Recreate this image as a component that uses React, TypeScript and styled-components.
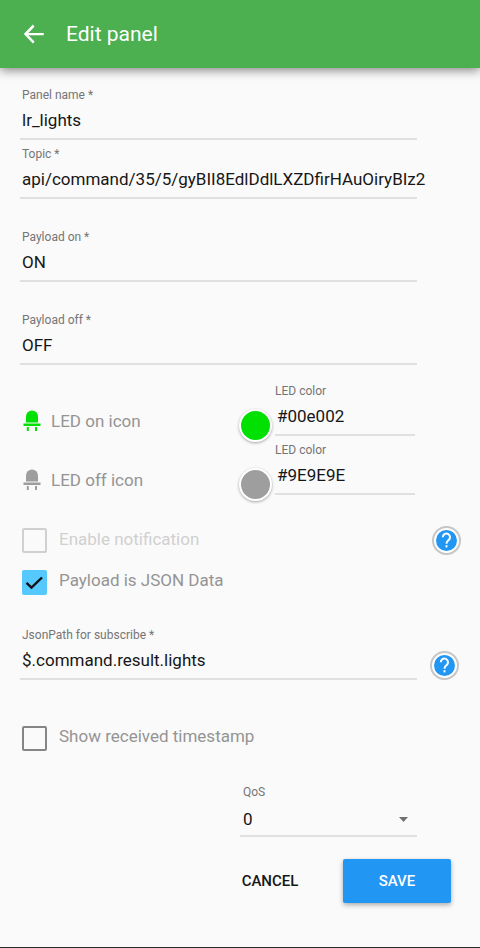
import React, { useId, useState } from "react";
import styled, { createGlobalStyle } from "styled-components";

const GlobalStyle = createGlobalStyle`
  *, *::before, *::after { box-sizing: border-box; }
  body {
    margin: 0;
    background: #fafafa;
    color: #161616;
    font-family: Roboto, "Liberation Sans", sans-serif;
    font-size: 17px;
  }
  button, input, select { font: inherit; color: inherit; }
`;

const Page = styled.div`
  display: flex;
  flex-direction: column;
  min-height: 100vh;
  border-bottom: 1px solid #2b2b2b;
`;

const AppBar = styled.header`
  display: flex;
  align-items: center;
  gap: 19px;
  height: 68px;
  padding: 0 21px;
  background: #4caf50;
  color: #fff;
  box-shadow: 0 2px 10px rgba(0, 0, 0, 0.5);
`;

const BackButton = styled.button`
  display: flex;
  padding: 0;
  border: 0;
  background: none;
  color: #fff;
  cursor: pointer;
`;

const Title = styled.h1`
  margin: 0;
  font-size: 21px;
  line-height: 28px;
  font-weight: 400;
`;

const Form = styled.form`
  display: flex;
  flex-direction: column;
  padding: 19px 19px 0 20px;
`;

const Row = styled.div<{ $top?: number }>`
  display: grid;
  grid-template-columns: minmax(0, 1fr) 44px;
  align-items: center;
  margin-top: ${(p) => p.$top ?? 0}px;
`;

const FieldBox = styled.div`
  display: flex;
  flex-direction: column;
  min-width: 0;
  border-bottom: 2px solid #e0e0e0;
`;

const FieldLabel = styled.label<{ $indent?: number }>`
  padding-left: ${(p) => p.$indent ?? 2}px;
  font-size: 12px;
  line-height: 16px;
  color: #757575;
`;

const FieldInput = styled.input`
  width: calc(100% + 12px);
  height: 35px;
  padding: 0 0 2px 2px;
  border: 0;
  outline: 0;
  background: transparent;
`;

const LedRow = styled.div<{ $top: number }>`
  display: grid;
  grid-template-columns: minmax(0, 1fr) 36px 140px;
  align-items: end;
  margin-top: ${(p) => p.$top}px;
  padding-right: 46px;
`;

const LedName = styled.div`
  display: flex;
  align-items: center;
  gap: 9px;
  height: 30px;
  padding-left: 2px;
  margin-bottom: auto;
  margin-top: 23px;
  color: #949494;
`;

const Swatch = styled.button<{ $color: string }>`
  width: 33px;
  height: 33px;
  margin-bottom: -6px;
  padding: 0;
  border: 2px solid #fff;
  border-radius: 50%;
  background: ${(p) => p.$color};
  box-shadow: 0 1px 3px rgba(0, 0, 0, 0.35);
  cursor: pointer;
`;

const CheckLabel = styled.label<{ $disabled?: boolean }>`
  display: flex;
  align-items: center;
  gap: 12px;
  height: 26px;
  padding-left: 2px;
  color: ${(p) => (p.$disabled ? "#d0d0d0" : "#949494")};
`;

const CheckText = styled.span`
  padding-bottom: 4px;
  line-height: 20px;
`;

const CheckBoxFrame = styled.span`
  display: grid;
  flex: none;
  width: 25px;
  height: 25px;

  > * { grid-area: 1 / 1; }
  > svg { pointer-events: none; }
`;

const CheckInput = styled.input`
  appearance: none;
  width: 25px;
  height: 25px;
  margin: 0;
  border: 2px solid #858585;
  border-radius: 2px;

  &:disabled { border-color: #d0d0d0; }
  &:checked { border-color: #55c8fd; background: #55c8fd; }
`;

const HelpButton = styled.button<{ $inField?: boolean }>`
  display: flex;
  align-items: center;
  justify-content: center;
  justify-self: end;
  align-self: ${(p) => (p.$inField ? "end" : "center")};
  margin-right: ${(p) => (p.$inField ? 2 : 0)}px;
  width: 29px;
  height: 29px;
  padding: 0;
  border: 2px solid #c6c6c6;
  border-radius: 50%;
  background: #fff;
  cursor: pointer;
`;

const QosRow = styled.div`
  display: flex;
  justify-content: flex-end;
  margin-top: 33px;
  padding-right: 44px;
`;

const QosBox = styled(FieldBox)`
  width: 177px;
`;

const SelectWrap = styled.div`
  display: grid;
  align-items: center;

  > * { grid-area: 1 / 1; }
  > svg { justify-self: end; margin: 3px 9px 0 0; pointer-events: none; }
`;

const Select = styled.select`
  appearance: none;
  width: 100%;
  height: 35px;
  padding: 2px 0 0 3px;
  border: 0;
  outline: 0;
  background: transparent;
`;

const Actions = styled.div`
  display: flex;
  justify-content: flex-end;
  gap: 28px;
  margin-top: 22px;
  padding: 0 10px 24px 0;
`;

const ActionButton = styled.button<{ $primary?: boolean }>`
  height: 44px;
  width: ${(p) => (p.$primary ? 108 : 90)}px;
  padding: 0;
  border: 0;
  border-radius: 2px;
  font-size: 15px;
  font-weight: 500;
  color: ${(p) => (p.$primary ? "#fff" : "#161616")};
  background: ${(p) => (p.$primary ? "#2196f3" : "transparent")};
  box-shadow: ${(p) => (p.$primary ? "0 2px 5px rgba(0, 0, 0, 0.32)" : "none")};
  cursor: pointer;
`;

function LedIcon({ color }: { color: string }) {
  return (
    <svg width="20" height="24" viewBox="0 0 20 24" fill={color} aria-hidden="true">
      <path d="M4 13.5V7.500a6 6 0 0 1 12 0v6z" />
      <path d="M1.500 14.500h17v2.500h-17zM4.800 18h2v4h-2zM13 18h2v4h-2z" />
    </svg>
  );
}

function Help({ label, inField }: { label: string; inField?: boolean }) {
  return (
    <HelpButton type="button" aria-label={label} $inField={inField}>
      <svg width="21" height="21" viewBox="0 0 21 21" aria-hidden="true">
        <circle cx="10.5" cy="10.5" r="10.5" fill="#2196f3" />
        <path
          d="M6.800 7.200a3.600 3.600 0 1 1 6 2.700c-1.300 1.200-2.300 1.800-2.300 3.800"
          fill="none"
          stroke="#fff"
          strokeWidth="2"
        />
        <path d="M9.500 15.200h2v2.200h-2z" fill="#fff" />
      </svg>
    </HelpButton>
  );
}

type FieldProps = { label: string; initial: string; indent?: number };

function Field({ label, initial, indent }: FieldProps) {
  const id = useId();
  const [value, setValue] = useState(initial);
  return (
    <FieldBox>
      <FieldLabel htmlFor={id} $indent={indent}>{label}</FieldLabel>
      <FieldInput id={id} type="text" value={value} onChange={(e) => setValue(e.target.value)} />
    </FieldBox>
  );
}

type LedProps = { name: string; color: string; top: number };

function Led({ name, color, top }: LedProps) {
  return (
    <LedRow $top={top}>
      <LedName>
        <LedIcon color={color} />
        {name}
      </LedName>
      <Swatch type="button" $color={color} aria-label={`Pick color for ${name}`} />
      <Field label="LED color" initial={color} indent={0} />
    </LedRow>
  );
}

type CheckProps = { label: string; initial?: boolean; disabled?: boolean };

function Check({ label, initial = false, disabled }: CheckProps) {
  const [checked, setChecked] = useState(initial);
  return (
    <CheckLabel $disabled={disabled}>
      <CheckBoxFrame>
        <CheckInput
          type="checkbox"
          checked={checked}
          disabled={disabled}
          onChange={(e) => setChecked(e.target.checked)}
        />
        {checked && (
          <svg width="25" height="25" viewBox="0 0 25 25" aria-hidden="true">
            <path d="M4.500 12.800l5 4.700L20 7.500" fill="none" stroke="#111" strokeWidth="2.4" />
          </svg>
        )}
      </CheckBoxFrame>
      <CheckText>{label}</CheckText>
    </CheckLabel>
  );
}

export default function App() {
  return (
    <Page>
      <GlobalStyle />
      <AppBar>
        <BackButton type="button" aria-label="Back">
          <svg width="26" height="26" viewBox="0 0 24 24" fill="currentColor" aria-hidden="true">
            <path d="M21 11H6.830l5.580-5.590L11 3.200 2.600 12l8.400 8.800 1.600-1.600L6.830 13.200H21z" />
          </svg>
        </BackButton>
        <Title>Edit panel</Title>
      </AppBar>
      <Form onSubmit={(e) => e.preventDefault()}>
        <Row><Field label="Panel name *" initial="lr_lights" /></Row>
        <Row $top={6}>
          <Field label="Topic *" initial="api/command/35/5/gyBII8EdlDdlLXZDfirHAuOiryBIz2" />
        </Row>
        <Row $top={30}><Field label="Payload on *" initial="ON" /></Row>
        <Row $top={30}><Field label="Payload off *" initial="OFF" /></Row>
        <Led name="LED on icon" color="#00e002" top={18} />
        <Led name="LED off icon" color="#9E9E9E" top={6} />
        <Row $top={31}>
          <Check label="Enable notification" disabled />
          <Help label="Help on notifications" />
        </Row>
        <Row $top={14}><Check label="Payload is JSON Data" initial /></Row>
        <Row $top={32}>
          <Field label="JsonPath for subscribe *" initial="$.command.result.lights" />
          <Help label="Help on JsonPath" inField />
        </Row>
        <Row $top={45}><Check label="Show received timestamp" /></Row>
        <QosRow>
          <QosBox>
            <FieldLabel htmlFor="qos" $indent={3}>QoS</FieldLabel>
            <SelectWrap>
              <Select id="qos" defaultValue="0">
                <option>0</option>
                <option>1</option>
                <option>2</option>
              </Select>
              <svg width="9" height="5" viewBox="0 0 9 5" fill="#707070" aria-hidden="true">
                <path d="M0 0h9L4.500 5z" />
              </svg>
            </SelectWrap>
          </QosBox>
        </QosRow>
        <Actions>
          <ActionButton type="button">CANCEL</ActionButton>
          <ActionButton type="submit" $primary>SAVE</ActionButton>
        </Actions>
      </Form>
    </Page>
  );
}
